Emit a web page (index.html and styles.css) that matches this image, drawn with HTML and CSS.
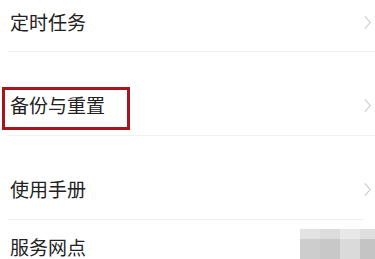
FILE: index.html
```html
<!DOCTYPE html>
<html lang="zh-CN">
<head>
    <meta charset="UTF-8">
    <meta name="viewport" content="width=device-width, initial-scale=1.0">
    <title>设置</title>
    <link rel="stylesheet" href="styles.css">
</head>
<body>
    <ul class="menu">
        <li class="item item-first">
            <span class="label">定时任务</span>
            <svg class="arrow" viewBox="0 0 8 16"><path d="M1 1 L7 8 L1 15"/></svg>
        </li>
        <li class="item item-marked">
            <span class="label">备份与重置</span>
            <svg class="arrow" viewBox="0 0 8 16"><path d="M1 1 L7 8 L1 15"/></svg>
            <span class="mark"></span>
        </li>
        <li class="item item-short">
            <span class="label">使用手册</span>
            <svg class="arrow" viewBox="0 0 8 16"><path d="M1 1 L7 8 L1 15"/></svg>
        </li>
        <li class="item item-last">
            <span class="label">服务网点</span>
            <div class="blur">
                <span></span><span></span><span></span><span></span>
                <span></span><span></span><span></span><span></span>
            </div>
        </li>
    </ul>
</body>
</html>
```

FILE: styles.css
```css
body {
    margin: 0;
    background: #fff;
    font-family: "Noto Sans CJK SC", "Noto Sans", sans-serif;
    color: #222;
    overflow: hidden;
}
.menu {
    list-style: none;
    margin: 0;
    padding: 0 0 0 8px;
}
.item {
    position: relative;
    display: flex;
    align-items: center;
    justify-content: space-between;
    padding: 41px 0 18px 2px;
    border-bottom: 1px solid #f0f0f0;
}
.item-first {
    padding-top: 10px;
    padding-bottom: 17px;
}
.item-short {
    margin-right: 12px;
}
.item-last {
    align-items: flex-start;
    padding-top: 15px;
    border-bottom: none;
}
.label {
    font-size: 19px;
    line-height: 24px;
}
.arrow {
    width: 7px;
    height: 15px;
    margin-right: 4px;
    fill: none;
    stroke: #c9c9c9;
    stroke-width: 1.3;
}
.item-short .arrow {
    margin-right: -8px;
}
.mark {
    position: absolute;
    left: -6px;
    top: 35px;
    width: 122px;
    height: 37px;
    border: 3px solid #a8141a;
}
.blur {
    display: grid;
    grid-template-columns: repeat(3, 20px) 15px;
    grid-template-rows: 10px 20px;
    margin-top: -6px;
}
.blur span:nth-child(1) { background: #e3e3e3; }
.blur span:nth-child(2) { background: #dcdcdc; }
.blur span:nth-child(3) { background: #e8e8e8; }
.blur span:nth-child(4) { background: #dedede; }
.blur span:nth-child(5) { background: #cdcdcd; }
.blur span:nth-child(6) { background: #c8c8c8; }
.blur span:nth-child(7) { background: #dadada; }
.blur span:nth-child(8) { background: #c4c4c4; }
```
